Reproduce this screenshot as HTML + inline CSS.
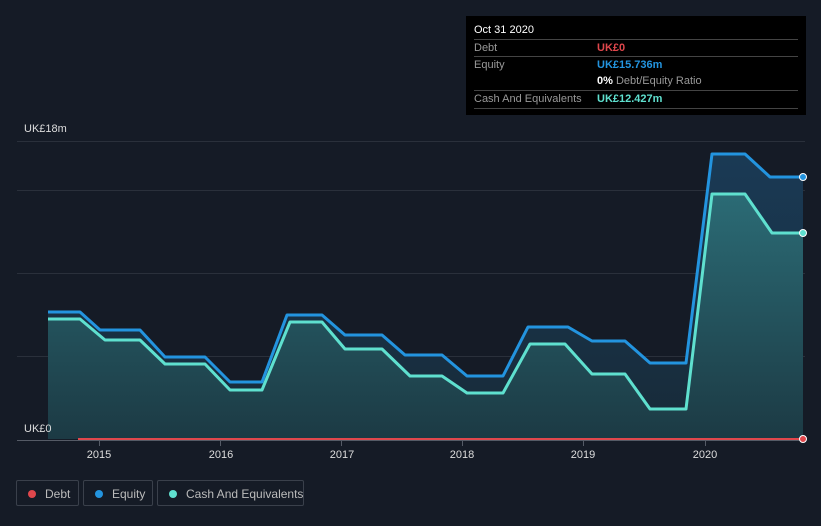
<!DOCTYPE html><html><head><style>
body{margin:0;width:821px;height:526px;background:#151b26;font-family:"Liberation Sans",sans-serif;overflow:hidden;position:relative}
.tt{position:absolute;left:466px;top:16px;width:340px;height:99px;background:#000;color:#999;font-size:11px}
.r{position:absolute;left:8px;width:324px;border-top:1px solid #444;height:17px;line-height:17px}
.r span{position:absolute;left:123px;font-weight:bold;white-space:nowrap}
.lg{position:absolute;top:480px;height:26px;border:1px solid #3a404b;border-radius:2px;color:#bbb;font-size:12px;line-height:26px;box-sizing:border-box;white-space:nowrap}
.lg i{position:absolute;left:11px;top:9px;width:8px;height:8px;border-radius:50%}
</style></head><body>
<svg width="821" height="526" style="position:absolute;left:0;top:0">
<defs><linearGradient id="g" x1="0" y1="0" x2="0" y2="1"><stop offset="0" stop-color="#1a3a55"/><stop offset="1" stop-color="#172a38"/></linearGradient>
<linearGradient id="c" x1="0" y1="0" x2="0" y2="1"><stop offset="0" stop-color="#2b6b75"/><stop offset="1" stop-color="#1c3a44"/></linearGradient></defs>
<g stroke="#2a303b" stroke-width="1"><line x1="17" y1="141.5" x2="805" y2="141.5"/><line x1="17" y1="190.5" x2="805" y2="190.5"/><line x1="17" y1="273.5" x2="805" y2="273.5"/><line x1="17" y1="356.5" x2="805" y2="356.5"/></g>
<path d="M48,312 L80,312 L100,330 L140,330 L165,357 L205,357 L230,382 L262,382 L287,315 L322,315 L345,335 L382,335 L405,355 L442,355 L467,376 L503,376 L528,327 L568,327 L592,341 L625,341 L650,363 L686,363 L712,154 L745,154 L770,177 L803,177 L803,439 L48,439Z" fill="url(#g)"/>
<path d="M48,319 L80,319 L105,340 L140,340 L165,364 L205,364 L230,390 L262,390 L290,322 L322,322 L345,349 L382,349 L410,376 L442,376 L467,393 L503,393 L530,344 L565,344 L592,374 L625,374 L650,409 L686,409 L712,194 L745,194 L772,233 L803,233 L803,439 L48,439Z" fill="url(#c)"/>
<path d="M48,312 L80,312 L100,330 L140,330 L165,357 L205,357 L230,382 L262,382 L287,315 L322,315 L345,335 L382,335 L405,355 L442,355 L467,376 L503,376 L528,327 L568,327 L592,341 L625,341 L650,363 L686,363 L712,154 L745,154 L770,177 L803,177" fill="none" stroke="#2394df" stroke-width="3" stroke-linejoin="round"/>
<path d="M48,319 L80,319 L105,340 L140,340 L165,364 L205,364 L230,390 L262,390 L290,322 L322,322 L345,349 L382,349 L410,376 L442,376 L467,393 L503,393 L530,344 L565,344 L592,374 L625,374 L650,409 L686,409 L712,194 L745,194 L772,233 L803,233" fill="none" stroke="#5fe0cf" stroke-width="3" stroke-linejoin="round"/>
<line x1="17" y1="440.5" x2="805" y2="440.5" stroke="#555b66"/>
<line x1="78" y1="439" x2="803" y2="439" stroke="#e0474c" stroke-width="2"/>
<circle cx="803" cy="177" r="3.5" fill="#2394df" stroke="#fff" stroke-width="1"/>
<circle cx="803" cy="233" r="3.5" fill="#5fe0cf" stroke="#fff" stroke-width="1"/>
<circle cx="803" cy="439" r="3.5" fill="#e0474c" stroke="#fff" stroke-width="1"/>
<g stroke="#555b66"><line x1="99.5" y1="441" x2="99.5" y2="446"/><line x1="220.5" y1="441" x2="220.5" y2="446"/><line x1="341.5" y1="441" x2="341.5" y2="446"/><line x1="462.5" y1="441" x2="462.5" y2="446"/><line x1="583.5" y1="441" x2="583.5" y2="446"/><line x1="705.5" y1="441" x2="705.5" y2="446"/></g>
<g fill="#ddd" font-size="11" font-family="Liberation Sans" text-anchor="middle"><text x="99" y="458">2015</text><text x="221" y="458">2016</text><text x="342" y="458">2017</text><text x="462" y="458">2018</text><text x="583" y="458">2019</text><text x="705" y="458">2020</text></g>
<text x="24" y="132" fill="#ddd" font-size="11">UK£18m</text>
<rect x="17" y="420" width="31" height="16" fill="#151b26"/>
<text x="24" y="432" fill="#ddd" font-size="11">UK£0</text>
</svg>
<div class="tt">
<div style="position:absolute;left:8px;top:8px;color:#fff;font-size:11px">Oct 31 2020</div>
<div class="r" style="top:23px">Debt<span style="color:#e0474c">UK£0</span></div>
<div class="r" style="top:40px">Equity<span style="color:#2394df">UK£15.736m</span></div>
<div class="r" style="top:57px;border-top:none"><span style="color:#fff">0% <b style="color:#999;font-weight:normal">Debt/Equity Ratio</b></span></div>
<div class="r" style="top:74px;border-bottom:1px solid #444">Cash And Equivalents<span style="color:#5fe0cf">UK£12.427m</span></div>
</div>
<div class="lg" style="left:16px;width:63px"><i style="background:#e0474c"></i><span style="position:absolute;left:28px">Debt</span></div>
<div class="lg" style="left:83px;width:70px"><i style="background:#2394df"></i><span style="position:absolute;left:28px">Equity</span></div>
<div class="lg" style="left:157px;width:147px"><i style="background:#5fe0cf"></i><span style="position:absolute;left:28px">Cash And Equivalents</span></div>
</body></html>
